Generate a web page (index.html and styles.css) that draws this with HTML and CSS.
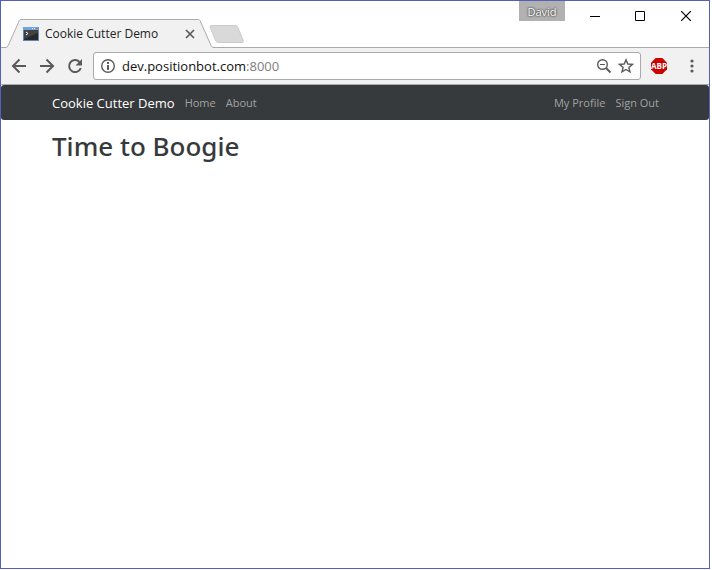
FILE: index.html
```html
<!DOCTYPE html>
<html lang="en">
<head>
<meta charset="utf-8">
<title>Cookie Cutter Demo</title>
<link rel="stylesheet" href="styles.css">
</head>
<body>
<div class="window">
  <header class="titlebar">
    <div class="tab">
      <svg class="tab-shape" width="208" height="29" viewBox="0 0 208 29" aria-hidden="true"><path d="M0 28.500 Q1.500 28 2.200 26.500 L13.300 1.500 Q13.800 .5 15 .5 H192.500 Q193.500 .5 194 1.500 L205 26.500 Q206 28.500 208 28.500 V29 H0Z" fill="#f1f1f1"/><path d="M0 28.500 Q1.500 28 2.200 26.500 L13.300 1.500 Q13.800 .5 15 .5 H192.500 Q193.500 .5 194 1.500 L205 26.500 Q206 28.500 208 28.500" fill="none" stroke="#ababab"/></svg>
      <svg class="favicon" width="16" height="14" viewBox="0 0 16 14" aria-hidden="true"><rect width="16" height="14" fill="#5b86bd"/><rect width="16" height="3" fill="#6fa5df"/><path d="M9 1h1v1H9zM11 1h1v1h-1z" fill="#dcecff"/><rect x="13" y="1" width="2" height="1" fill="#e0563e"/><rect x="1" y="3" width="14" height="10" fill="#28292b"/><path d="M1 3h14v3L1 12z" fill="#414244"/><path d="M3 5l2 1.500L3 8" fill="none" stroke="#fff"/></svg>
      <span class="tab-title">Cookie Cutter Demo</span>
      <button class="tab-close" aria-label="Close tab"><svg width="10" height="10" viewBox="0 0 10 10"><path d="M1 1l8 8M9 1l-8 8" stroke="#5a5a5a" stroke-width="1.700"/></svg></button>
    </div>
    <button class="new-tab" aria-label="New tab"><svg width="36" height="18" viewBox="0 0 36 18"><path d="M2.500.5H26Q28 .5 28.700 2L34.300 15.500Q35 17.500 33 17.500H9.500Q7.500 17.500 6.800 16L1 2Q.5.5 2.500.5Z" fill="#d9d9d9" stroke="#cbcbcb"/></svg></button>
    <div class="controls">
      <button class="profile">David</button>
      <button class="control" aria-label="Minimize"><svg width="10" height="10"><path d="M0 5.500h10" stroke="#000"/></svg></button>
      <button class="control" aria-label="Maximize"><svg width="10" height="10"><path d="M.5.5h9v9h-9z" fill="none" stroke="#000"/></svg></button>
      <button class="control" aria-label="Close"><svg width="10" height="10"><path d="M0 0l10 10M10 0L0 10" stroke="#000" stroke-width="1.200"/></svg></button>
    </div>
  </header>
  <div class="toolbar">
    <button class="tool" aria-label="Back"><svg width="16" height="16" viewBox="0 0 16 16"><path d="M15 8H2M8.500 1.500L2 8l6.500 6.500" class="line"/></svg></button>
    <button class="tool" aria-label="Forward"><svg width="16" height="16" viewBox="0 0 16 16"><path d="M1 8h13M7.500 1.500L14 8l-6.500 6.500" class="line"/></svg></button>
    <button class="tool" aria-label="Reload"><svg width="16" height="16" viewBox="0 0 16 16"><path d="M13.800 10A6 6 0 1 1 12.500 4" class="line"/><path d="M15 1v6.500H8.500z" fill="#5a5a5a"/></svg></button>
    <div class="address">
      <button class="site-info" aria-label="Site information"><svg width="16" height="16" viewBox="0 0 16 16"><circle cx="8" cy="8" r="6.300" fill="none" stroke="#5a5a5a" stroke-width="1.400"/><path d="M7 4h2v2H7zM7 7h2v5H7z" fill="#5a5a5a"/></svg></button>
      <span class="url">dev.positionbot.com<span class="port">:8000</span></span>
      <button class="address-action" aria-label="Zoom"><svg width="16" height="16" viewBox="0 0 16 16"><circle cx="6.500" cy="6.500" r="4.800" fill="none" stroke="#5a5a5a" stroke-width="1.400"/><path d="M10 10l4.500 4.500" stroke="#5a5a5a" stroke-width="1.900"/><path d="M4 6.500h5" stroke="#5a5a5a"/></svg></button>
      <button class="address-action" aria-label="Bookmark this page"><svg width="16" height="16" viewBox="0 0 16 16"><path d="M8 1.800L9.800 6l4.600.4-3.500 3 1.100 4.500L8 11.500l-4 2.400 1.100-4.500-3.500-3L6.200 6z" fill="none" stroke="#5a5a5a" stroke-width="1.400"/></svg></button>
    </div>
    <button class="extension" aria-label="Adblock Plus"><svg width="16" height="16" viewBox="0 0 16 16"><path d="M4.700 0h6.600L16 4.700v6.600L11.300 16H4.700L0 11.300V4.700z" fill="#cb0000"/><text x="8" y="11" text-anchor="middle" class="abp">ABP</text></svg></button>
    <button class="menu" aria-label="Menu"><svg width="4" height="14" viewBox="0 0 4 14"><g fill="#5a5a5a"><circle cx="2" cy="2" r="1.600"/><circle cx="2" cy="7" r="1.600"/><circle cx="2" cy="12" r="1.600"/></g></svg></button>
  </div>
  <nav class="navbar">
    <a class="brand" href="#">Cookie Cutter Demo</a>
    <a class="nav-link" href="#">Home</a>
    <a class="nav-link" href="#">About</a>
    <span class="spacer"></span>
    <a class="nav-link" href="#">My Profile</a>
    <a class="nav-link" href="#">Sign Out</a>
  </nav>
  <main class="content">
    <h1>Time to Boogie</h1>
  </main>
</div>
</body>
</html>
```
FILE: styles.css
```css
* { box-sizing: border-box; }

body {
  margin: 0;
  background: #fff;
  font-family: "Open Sans", "Noto Sans", sans-serif;
  font-size: 12px;
  color: #373a3c;
}

button {
  display: flex;
  align-items: center;
  justify-content: center;
  padding: 0;
  border: 0;
  background: none;
  font: inherit;
}

svg { display: block; flex: none; }

.window {
  min-height: calc(100vh - 1px);
  margin: 0 2px 1px 0;
  border: 1px solid #5560b8;
}

.titlebar {
  display: flex;
  align-items: flex-end;
  height: 47px;
  padding-left: 5px;
  border-bottom: 1px solid #ababab;
}

.tab {
  position: relative;
  display: flex;
  align-items: center;
  width: 208px;
  height: 29px;
  margin-bottom: -1px;
  padding: 0 19px 0 17px;
}

.tab-shape { position: absolute; top: 0; left: 0; }
.favicon, .tab-close { position: relative; }

.tab-title {
  position: relative;
  flex: 1;
  margin-left: 6px;
  line-height: 16px;
  color: #222;
  white-space: nowrap;
}

.new-tab { margin: 0 0 4px -5px; }

.controls {
  display: flex;
  align-self: flex-start;
  margin-left: auto;
}

.profile {
  width: 46px;
  height: 20px;
  margin-right: 7px;
  background: #b1b1b1;
  color: #fff;
  font-size: 11px;
  text-shadow: 0 0 2px #333, 0 0 2px #444;
}

.control { width: 45px; height: 29px; }
.control:last-child { width: 47px; }

.toolbar {
  display: flex;
  align-items: center;
  height: 37px;
  padding: 0 8px 0 4px;
  background: #f1f1f1;
  border-bottom: 1px solid #ababab;
}

.tool { width: 28px; height: 28px; }

.line { fill: none; stroke: #5a5a5a; stroke-width: 2; }

.address {
  display: flex;
  flex: 1;
  align-items: center;
  height: 28px;
  margin-left: 4px;
  padding: 0 6px;
  background: #fff;
  border: 1px solid #a9a9a9;
  border-radius: 3px;
}

.url {
  flex: 1;
  margin-left: 6px;
  font-size: 13px;
  line-height: 20px;
  color: #111;
}

.port { color: #808080; }
.address-action { margin-left: 6px; }
.extension { margin-left: 10px; }
.abp { fill: #fff; font: bold 8px "Open Sans", sans-serif; }
.menu { width: 18px; height: 28px; margin-left: 16px; }

.navbar {
  display: flex;
  align-items: center;
  gap: 10px;
  height: 35px;
  padding: 0 50px 0 51px;
  background: #373a3c;
  border-radius: 3px;
}

.navbar a { text-decoration: none; white-space: nowrap; }
.brand { color: #fff; font-size: 13px; }
.nav-link { color: #a0a2a3; font-size: 11px; }
.spacer { flex: 1; }

.content { padding: 10px 51px; }

h1 {
  margin: 0;
  font: 500 26px/32px "Noto Sans", sans-serif;
}
```
